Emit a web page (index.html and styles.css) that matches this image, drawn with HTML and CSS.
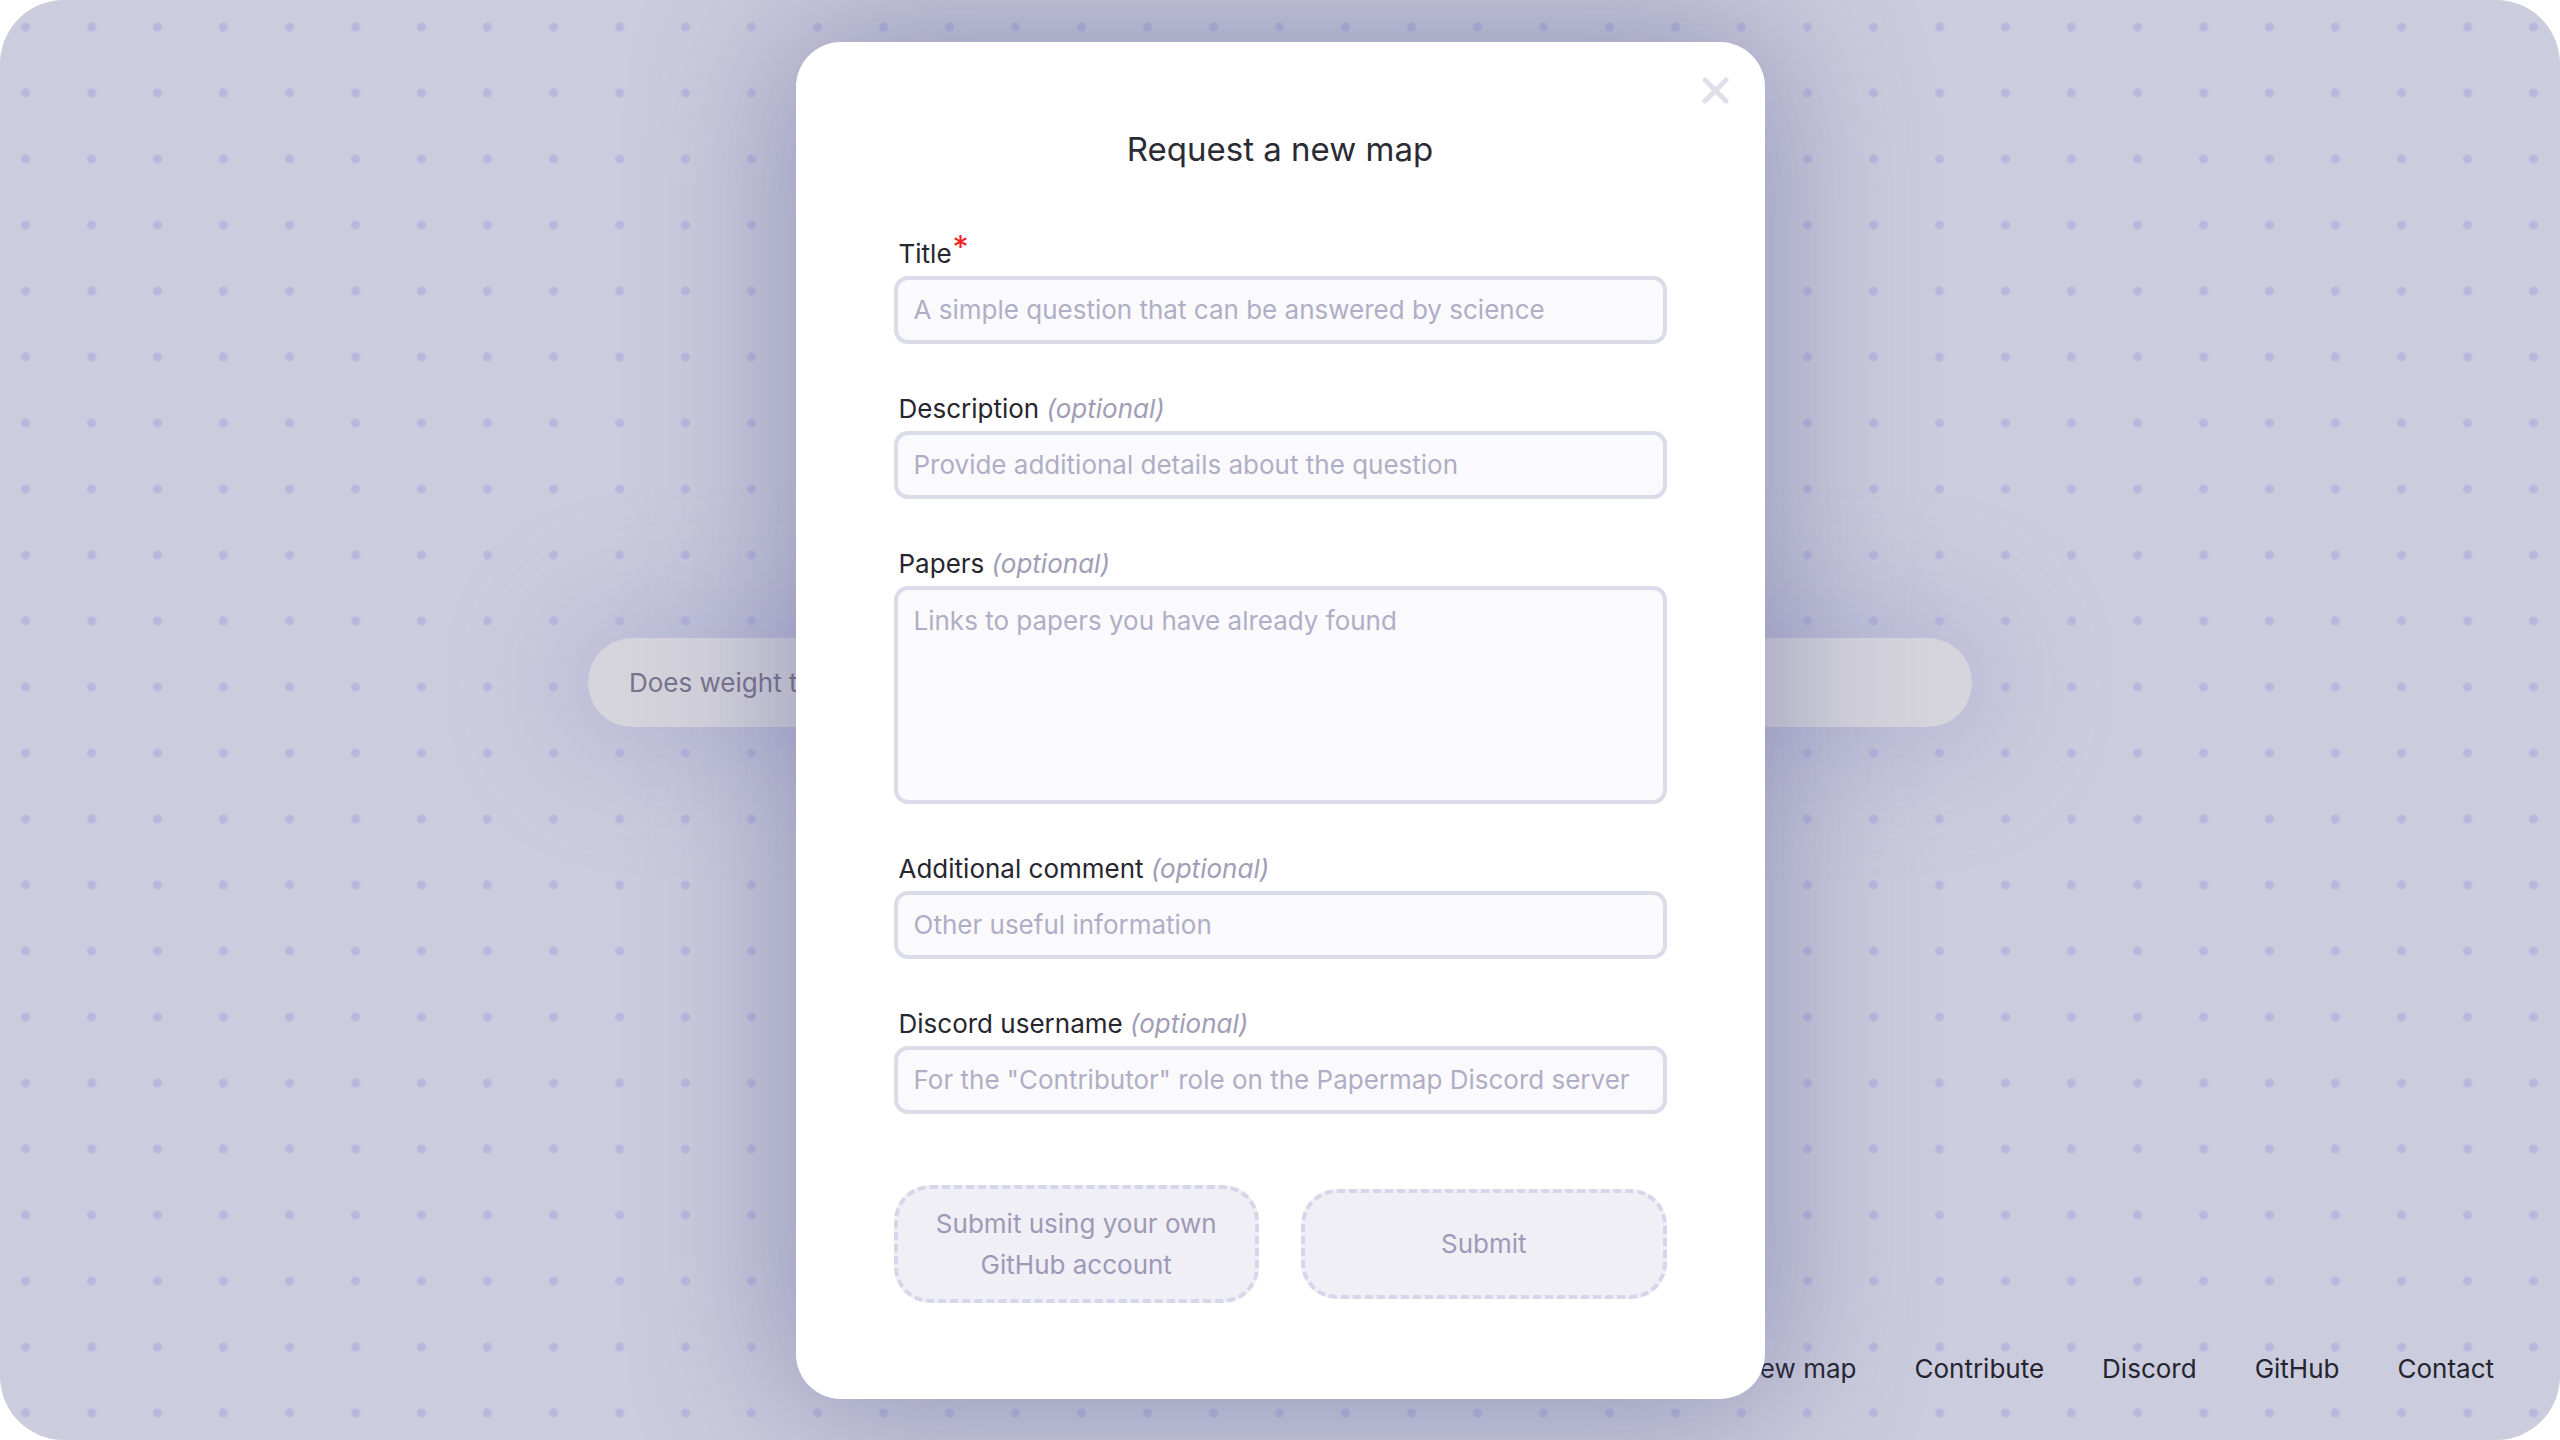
FILE: index.html
```html
<!DOCTYPE html>
<html lang="en">
<head>
<meta charset="utf-8">
<title>Papermap – Request a new map</title>
<link rel="stylesheet" href="styles.css">
</head>
<body>
<div class="page">
  <main class="stage">
    <div class="search-pill"><span class="search-text">Does weight training improve longevity?</span></div>
  </main>
  <footer class="footer">
    <a class="footer-link" href="#">Request a new map</a>
    <a class="footer-link" href="#">Contribute</a>
    <a class="footer-link" href="#">Discord</a>
    <a class="footer-link" href="#">GitHub</a>
    <a class="footer-link" href="#">Contact</a>
  </footer>

  <div class="overlay">
    <div class="modal">
      <button class="close" aria-label="Close">
        <svg width="27" height="27" viewBox="0 0 27 27"><path d="M3 3 L24 24 M24 3 L3 24" stroke="#dfdeea" stroke-width="5" stroke-linecap="round" fill="none"/></svg>
      </button>
      <h2 class="modal-title">Request a new map</h2>

      <div class="field">
        <label class="label">Title<span class="req">*</span></label>
        <input class="input" type="text" placeholder="A simple question that can be answered by science">
      </div>
      <div class="field">
        <label class="label">Description <span class="opt">(optional)</span></label>
        <input class="input" type="text" placeholder="Provide additional details about the question">
      </div>
      <div class="field">
        <label class="label">Papers <span class="opt">(optional)</span></label>
        <textarea class="input textarea" placeholder="Links to papers you have already found"></textarea>
      </div>
      <div class="field">
        <label class="label">Additional comment <span class="opt">(optional)</span></label>
        <input class="input" type="text" placeholder="Other useful information">
      </div>
      <div class="field">
        <label class="label">Discord username <span class="opt">(optional)</span></label>
        <input class="input" type="text" placeholder="For the &quot;Contributor&quot; role on the Papermap Discord server">
      </div>

      <div class="actions">
        <button class="btn btn-github">Submit using your own<br>GitHub account</button>
        <button class="btn btn-submit">Submit</button>
      </div>
    </div>
  </div>
</div>
</body>
</html>
```

FILE: styles.css
```css
* { box-sizing: border-box; }

html, body {
  margin: 0;
  padding: 0;
  background: #ffffff;
}

body {
  font-family: "Inter", "Noto Sans", sans-serif;
  width: 2560px;
  height: 1440px;
  overflow: hidden;
}

.page {
  position: relative;
  width: 2560px;
  height: 1440px;
  border-radius: 64px;
  overflow: hidden;
  background-color: #cbccdd;
  background-image: radial-gradient(circle at center, #b8b8de 0, #b8b8de 4px, rgba(184,184,222,0) 5px);
  background-size: 66px 66px;
  background-position: -7.5px -6px;
  display: flex;
  flex-direction: column;
}

.stage {
  flex: 1;
  display: flex;
  align-items: center;
  justify-content: center;
  padding-top: 15px;
}

.search-pill {
  width: 1384px;
  height: 89px;
  border-radius: 45px;
  background: #d6d5dd;
  display: flex;
  align-items: center;
  padding-left: 41px;
  box-shadow: 0 0 110px 30px rgba(150, 150, 200, 0.35);
}

.search-text {
  font-size: 26px;
  color: #77748c;
  white-space: nowrap;
}

.footer {
  display: flex;
  justify-content: flex-end;
  gap: 58px;
  padding: 0 66px 52px 0;
}

.footer-link {
  font-size: 26px;
  line-height: 39px;
  color: #26252f;
  text-decoration: none;
}

.overlay {
  position: absolute;
  inset: 0;
  display: flex;
  align-items: center;
  justify-content: center;
}

.modal {
  position: relative;
  width: 969px;
  background: #ffffff;
  border-radius: 45px;
  padding: 87px 98px 96px;
  box-shadow: 0 0 150px 10px rgba(80, 80, 140, 0.45);
}

.close {
  position: absolute;
  top: 35px;
  right: 36px;
  width: 27px;
  height: 27px;
  padding: 0;
  border: 0;
  background: none;
  display: block;
}

.close svg { display: block; }

.modal-title {
  margin: 0 0 65px;
  font-size: 33px;
  line-height: 40px;
  font-weight: 400;
  color: #2b2b33;
  text-align: center;
}

.field {
  display: flex;
  flex-direction: column;
  margin-bottom: 45px;
}

.label {
  font-size: 26px;
  line-height: 39px;
  color: #27262f;
  margin-bottom: 3px;
  padding-left: 5px;
}

.req {
  color: #f41f1f;
  font-size: 32px;
  vertical-align: 4px;
  line-height: 0;
  margin-left: 1px;
}

.opt {
  font-style: italic;
  color: #a09eb7;
}

.input {
  width: 100%;
  height: 68px;
  border: 4px solid #dcdbe9;
  border-radius: 14px;
  background: #fafafd;
  padding: 0 16px;
  font-family: "Inter", "Noto Sans", sans-serif;
  font-size: 26px;
  color: #2b2b33;
  outline: none;
}

.input::placeholder {
  color: #b0aec6;
  opacity: 1;
}

.textarea {
  height: 218px;
  padding: 11px 16px;
  line-height: 39px;
  resize: none;
  display: block;
}

.actions {
  display: grid;
  grid-template-columns: 1fr 1fr;
  gap: 42px;
  align-items: center;
  margin-top: 71px;
}

.btn {
  border: 4px dashed #d6d5ea;
  background: #efeff5;
  border-radius: 36px;
  color: #9d9ab7;
  font-family: "Inter", "Noto Sans", sans-serif;
  font-size: 26px;
  line-height: 41px;
  text-align: center;
  padding: 0;
}

.btn-github { height: 118px; }
.btn-submit { height: 110px; }

.field:last-of-type { margin-bottom: 0; }
```
